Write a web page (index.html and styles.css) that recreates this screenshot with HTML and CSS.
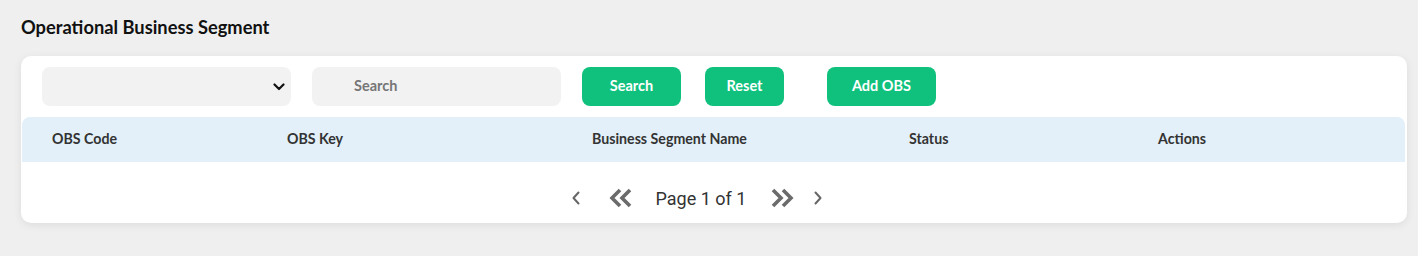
FILE: index.html
```html
<!DOCTYPE html>
<html lang="en">
<head>
    <meta charset="UTF-8">
    <meta name="viewport" content="width=device-width, initial-scale=1.0">
    <title>Operational Business Segment</title>
    <link rel="stylesheet" href="styles.css">
</head>
<body>
    <div class="page">
        <h1 class="page-title">Operational Business Segment</h1>

        <div class="card">
            <div class="toolbar">
                <div class="select-box">
                    <select class="select"><option value=""></option></select>
                    <svg class="select-arrow" width="12" height="8" viewBox="0 0 12 8">
                        <polyline points="1.5,1.5 6,6 10.5,1.5" fill="none" stroke="#111" stroke-width="2.2" stroke-linecap="round" stroke-linejoin="round"/>
                    </svg>
                </div>
                <input class="search-input" type="text" placeholder="Search">
                <button class="btn btn-search">Search</button>
                <button class="btn btn-reset">Reset</button>
                <button class="btn btn-add">Add OBS</button>
            </div>

            <div class="table-head">
                <div>OBS Code</div>
                <div>OBS Key</div>
                <div>Business Segment Name</div>
                <div>Status</div>
                <div>Actions</div>
            </div>

            <div class="pager">
                <span class="pg-btn pg-prev">
                    <svg width="10" height="16" viewBox="0 0 10 16">
                        <polyline points="7.5,2.5 2.5,8 7.5,13.5" fill="none" stroke="#666" stroke-width="2" stroke-linecap="round" stroke-linejoin="round"/>
                    </svg>
                </span>
                <span class="pg-btn pg-first">
                    <svg width="26" height="20" viewBox="0 0 26 20">
                        <polyline points="12,2 4,10 12,18" fill="none" stroke="#6b6b6b" stroke-width="3.6" stroke-linejoin="miter"/>
                        <polyline points="22,2 14,10 22,18" fill="none" stroke="#6b6b6b" stroke-width="3.6" stroke-linejoin="miter"/>
                    </svg>
                </span>
                <span class="pg-label">Page 1 of 1</span>
                <span class="pg-btn pg-last">
                    <svg width="26" height="20" viewBox="0 0 26 20">
                        <polyline points="4,2 12,10 4,18" fill="none" stroke="#6b6b6b" stroke-width="3.6" stroke-linejoin="miter"/>
                        <polyline points="14,2 22,10 14,18" fill="none" stroke="#6b6b6b" stroke-width="3.6" stroke-linejoin="miter"/>
                    </svg>
                </span>
                <span class="pg-btn pg-next">
                    <svg width="10" height="16" viewBox="0 0 10 16">
                        <polyline points="2.5,2.5 7.5,8 2.5,13.5" fill="none" stroke="#666" stroke-width="2" stroke-linecap="round" stroke-linejoin="round"/>
                    </svg>
                </span>
            </div>
        </div>
    </div>
</body>
</html>
```

FILE: styles.css
```css
:root {
    --green: #10c17d;
    --field-bg: #f2f2f2;
    --head-bg: #e3f0f9;
    --page-bg: #efefef;
}
html, body {
    margin: 0;
    background-color: var(--page-bg);
}
body {
    font-family: Lato, 'Open Sans', Arial, sans-serif;
    color: #222;
}
.page {
    padding: 16px 11px 32px 21px;
}
.page-title {
    margin: 0 0 18px 0;
    font-size: 18.3px;
    font-weight: 700;
    line-height: 22px;
    color: #111;
}
.card {
    background-color: white;
    border-radius: 10px;
    box-shadow: 0 2px 8px rgba(0,0,0,0.08);
    padding: 11px 1px 0 1px;
}
.toolbar {
    display: flex;
    align-items: center;
    padding: 0 0 0 20px;
    height: 39px;
}
.select-box {
    position: relative;
    width: 249px;
    height: 39px;
    margin-right: 21px;
}
.select {
    width: 100%;
    height: 100%;
    border: none;
    border-radius: 8px;
    background-color: var(--field-bg);
    appearance: none;
    -webkit-appearance: none;
    outline: none;
}
.select-arrow {
    position: absolute;
    right: 6px;
    top: 16px;
}
.search-input {
    width: 249px;
    height: 39px;
    box-sizing: border-box;
    border: none;
    border-radius: 8px;
    background-color: var(--field-bg);
    padding: 0 0 2px 42px;
    margin-right: 21px;
    font-family: Lato, Arial, sans-serif;
    font-size: 14.5px;
    font-weight: 700;
    outline: none;
}
.search-input::placeholder {
    color: #767676;
}
.btn {
    height: 39px;
    border: none;
    border-radius: 8px;
    background-color: var(--green);
    color: white;
    font-family: Lato, Arial, sans-serif;
    font-size: 14.5px;
    font-weight: 700;
    cursor: pointer;
    padding: 0 0 2px 0;
}
.btn-search {
    width: 99px;
    margin-right: 24px;
}
.btn-reset {
    width: 79px;
    margin-right: 43px;
}
.btn-add {
    width: 109px;
}
.table-head {
    display: grid;
    grid-template-columns: 235px 305px 317px 249px 1fr;
    align-items: center;
    height: 45px;
    box-sizing: border-box;
    margin: 11px 1px 0 0;
    padding: 0 0 2px 30px;
    background-color: var(--head-bg);
    border-radius: 8px 8px 0 0;
    font-size: 14.2px;
    font-weight: 700;
    color: #333;
}
.pager {
    display: flex;
    align-items: center;
    justify-content: center;
    height: 61px;
    box-sizing: border-box;
    padding: 11px 34px 0 0;
    font-family: Roboto, Arial, sans-serif;
}
.pg-btn {
    display: inline-flex;
    align-items: center;
    justify-content: center;
}
.pg-prev {
    margin-right: 27px;
}
.pg-first {
    margin-right: 22px;
}
.pg-label {
    font-size: 18px;
    color: #333;
    margin-right: 23px;
}
.pg-last {
    margin-right: 18px;
}
```
